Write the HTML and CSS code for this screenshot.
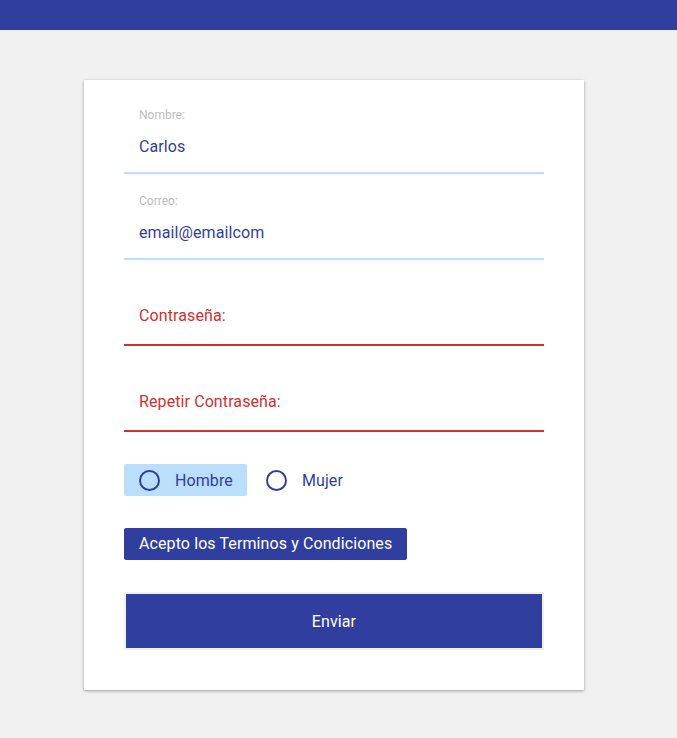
FILE: index.html
```html
<!DOCTYPE html>
<html lang="es">
<head>
<meta charset="utf-8">
<title>Formulario</title>
<link rel="stylesheet" href="styles.css">
</head>
<body>
<header class="topbar"></header>
<main class="page">
  <form class="card">
    <div class="field">
      <span class="field-label">Nombre:</span>
      <span class="field-value">Carlos</span>
    </div>
    <div class="field">
      <span class="field-label">Correo:</span>
      <span class="field-value">email@emailcom</span>
    </div>
    <div class="field field-error">
      <span class="field-value">Contraseña:</span>
    </div>
    <div class="field field-error">
      <span class="field-value">Repetir Contraseña:</span>
    </div>
    <div class="radios">
      <label class="radio radio-active"><span class="radio-circle"></span><span>Hombre</span></label>
      <label class="radio"><span class="radio-circle"></span><span>Mujer</span></label>
    </div>
    <div class="terms-row">
      <span class="terms">Acepto los Terminos y Condiciones</span>
    </div>
    <button type="button" class="submit">Enviar</button>
  </form>
</main>
</body>
</html>
```

FILE: styles.css
```css
* { box-sizing: border-box; }
html, body { margin: 0; padding: 0; }
body {
  background: #f1f1f1;
  font-family: Roboto, "Liberation Sans", sans-serif;
  font-size: 16px;
  letter-spacing: 0.1px;
  height: 738px;
}
.topbar {
  height: 30px;
  background: #303f9f;
}
.page {
  padding-top: 50px;
  padding-left: 84px;
}
.card {
  width: 500px;
  height: 610px;
  background: #fff;
  box-shadow: 0 1px 3px rgba(0,0,0,0.35);
  padding: 8px 40px 40px;
  display: flex;
  flex-direction: column;
}
.field {
  height: 86px;
  border-bottom: 2px solid #bbdefb;
  padding: 20px 15px 0;
  display: flex;
  flex-direction: column;
}
.field-label {
  font-size: 12px;
  line-height: 14px;
  letter-spacing: 0;
  color: #bdbdbd;
}
.field-value {
  margin-top: 13px;
  line-height: 24px;
  color: #303f9f;
}
.field-error {
  border-bottom-color: #d32f2f;
  padding-top: 31px;
}
.field-error .field-value {
  color: #d32f2f;
}
.radios {
  margin-top: 32px;
  display: flex;
  gap: 4px;
}
.radio {
  height: 32px;
  display: flex;
  align-items: center;
  gap: 15px;
  padding: 0 14px 0 15px;
  border-radius: 2px;
  color: #303f9f;
}
.radio-active { background: #bbdefb; }
.radio-circle {
  width: 21px;
  height: 21px;
  border: 2px solid #303f9f;
  border-radius: 50%;
}
.terms-row {
  margin-top: 32px;
  display: flex;
}
.terms {
  height: 32px;
  line-height: 32px;
  padding: 0 15px;
  background: #303f9f;
  color: #fff;
  border-radius: 2px;
}
.submit {
  margin-top: 32px;
  height: 58px;
  width: 420px;
  background: #303f9f;
  border: 2px solid #f0f0f0;
  color: #fff;
  font-family: inherit;
  font-size: 16px;
  letter-spacing: 0.1px;
  padding: 0;
}
```
